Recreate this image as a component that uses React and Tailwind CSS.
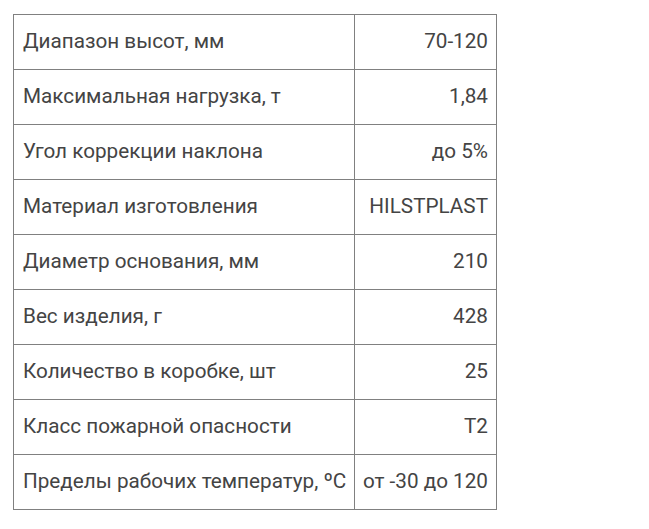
import React from 'react'

const rows = [
  ['Диапазон высот, мм', '70-120'],
  ['Максимальная нагрузка, т', '1,84'],
  ['Угол коррекции наклона', 'до 5%'],
  ['Материал изготовления', 'HILSTPLAST'],
  ['Диаметр основания, мм', '210'],
  ['Вес изделия, г', '428'],
  ['Количество в коробке, шт', '25'],
  ['Класс пожарной опасности', 'Т2'],
  ['Пределы рабочих температур, ºС', 'от -30 до 120'],
]

export default function App() {
  return (
    <div className="bg-white w-[649px] h-[529px] pt-[14px] pl-[13px] font-['Roboto',sans-serif] text-[20.7px] text-[#444]">
      <table className="border-collapse w-[484px] table-fixed">
        <tbody>
          {rows.map(([label, value]) => (
            <tr key={label} className="h-[55px]">
              <td className="border border-[#808080] pl-[9px] pr-0 w-[341px] whitespace-nowrap">{label}</td>
              <td className="border border-[#808080] pr-[8px] text-right whitespace-nowrap">{value}</td>
            </tr>
          ))}
        </tbody>
      </table>
    </div>
  )
}
